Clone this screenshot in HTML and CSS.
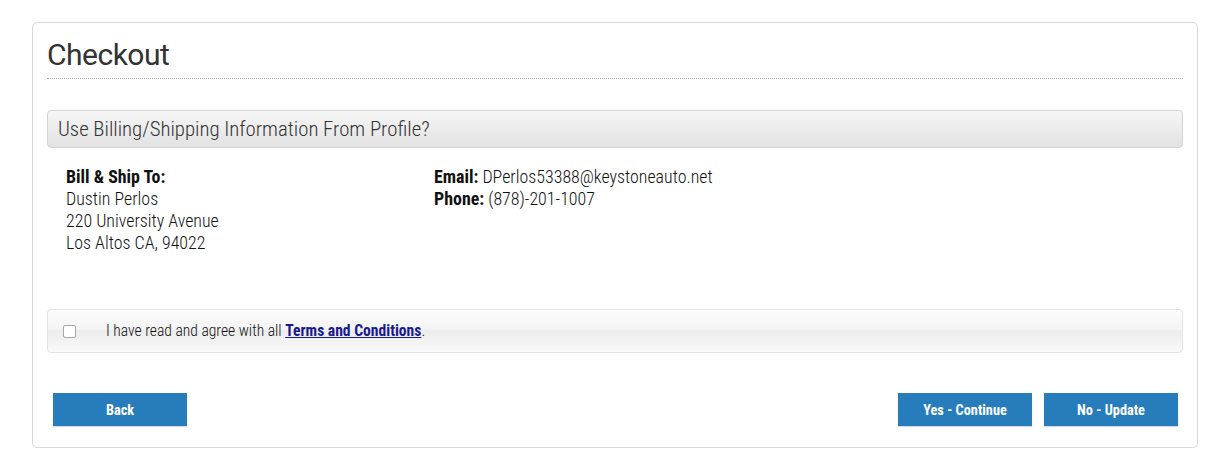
FILE: index.html
```html
<!DOCTYPE html>
<html>
<head>
<meta charset="utf-8">
<link rel="stylesheet" href="styles.css">
</head>
<body>
<div class="panel">
  <h1 class="title">Checkout</h1>
  <div class="bar">Use Billing/Shipping Information From Profile?</div>
  <div class="info">
    <div class="col col-addr">
      <div><b>Bill &amp; Ship To:</b></div>
      <div>Dustin Perlos</div>
      <div>220 University Avenue</div>
      <div>Los Altos CA, 94022</div>
    </div>
    <div class="col">
      <div><b>Email:</b> DPerlos53388@keystoneauto.net</div>
      <div><b>Phone:</b> (878)-201-1007</div>
    </div>
  </div>
  <div class="terms">
    <span class="check"></span>
    <span class="terms-text">I have read and agree with all <a href="#">Terms and Conditions</a>.</span>
  </div>
  <div class="actions">
    <button class="btn">Back</button>
    <div class="right">
      <button class="btn">Yes - Continue</button>
      <button class="btn">No - Update</button>
    </div>
  </div>
</div>
</body>
</html>
```
FILE: styles.css
```css
html, body { margin: 0; padding: 0; background: #fff; }
body {
  padding: 22px 32px 0 32px;
  font-family: "Roboto Condensed", Roboto, sans-serif;
  color: #222;
}
.panel {
  border: 1px solid #d9d9d9;
  border-radius: 5px;
  padding: 0 14px 21px 14px;
  box-shadow: 0 1px 1px rgba(0,0,0,0.05);
}
.title {
  margin: 0;
  padding: 15px 0 6px 0;
  font-family: Roboto, sans-serif;
  font-weight: 400;
  font-size: 30px;
  line-height: 34px;
  letter-spacing: -0.5px;
  color: #333;
  border-bottom: 1px dotted #aaa;
}
.bar {
  margin-top: 31px;
  height: 36px;
  line-height: 36px;
  border: 1px solid #d4d4d4;
  border-radius: 4px;
  padding: 0 10px;
  font-size: 20.8px;
  font-weight: 300;
  color: #333;
  background: linear-gradient(#f6f6f6, #e2e2e2);
}
.info {
  display: flex;
  padding: 18px 0 0 19px;
  font-size: 17.9px;
  line-height: 22px;
  font-weight: 300;
  color: #111;
  height: 161px;
  box-sizing: border-box;
}
.col-addr { width: 368px; }
.info b { font-weight: 700; color: #111; }
.terms {
  display: flex;
  align-items: center;
  height: 42px;
  border: 1px solid #e3e3e3;
  border-radius: 4px;
  background: linear-gradient(#fdfdfd 0%, #f4f4f4 45%, #ececec 50%, #fafafa 100%);
  padding-left: 15px;
  font-size: 15.6px;
  font-weight: 300;
  color: #111;
}
.check {
  width: 11px; height: 11px;
  border: 1px solid #a5a5a5;
  border-radius: 2px;
  background: #fff;
  margin-right: 30px;
}
.terms a { color: #1a1a8c; font-weight: 700; text-decoration: underline; }
.actions {
  display: flex;
  justify-content: space-between;
  margin-top: 40px;
  padding: 0 5px 0 6px;
}
.right { display: flex; gap: 12px; }
.btn {
  width: 134px;
  height: 33px;
  border: 0;
  border-radius: 0;
  background: #277cbb;
  color: #fff;
  font-family: "Roboto Condensed", Roboto, sans-serif;
  font-weight: 700;
  font-size: 14.3px;
  padding: 0;
  box-shadow: 0 1px 1px rgba(0,0,0,0.15);
}
```
